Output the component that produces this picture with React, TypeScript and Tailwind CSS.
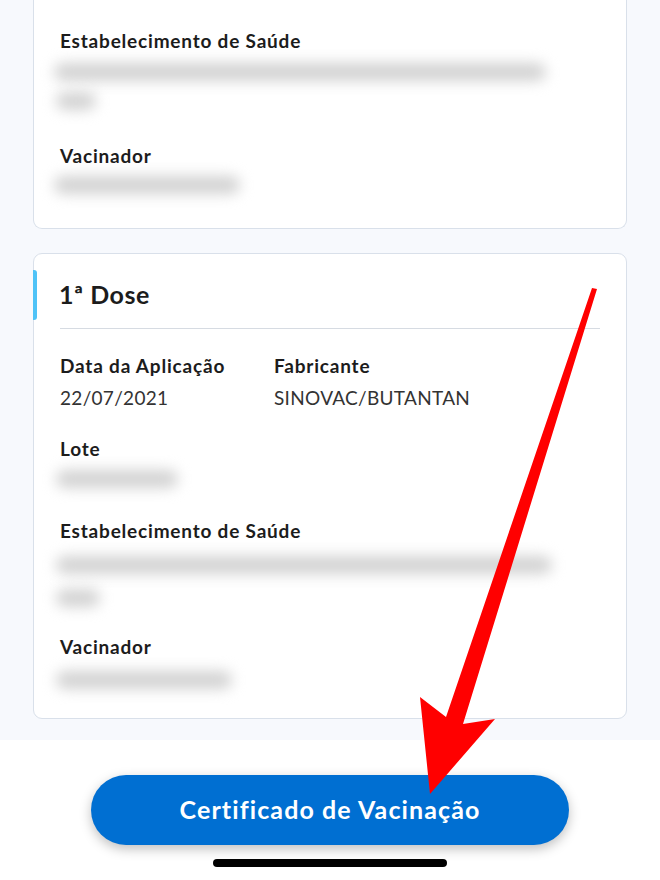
import React from 'react';

const Label: React.FC<{ children: React.ReactNode; className?: string }> = ({ children, className = '' }) => (
  <div className={`text-[19px] font-bold leading-[26px] tracking-[0.8px] text-[#1c1c1c] ${className}`}>{children}</div>
);

const Value: React.FC<{ children: React.ReactNode }> = ({ children }) => (
  <div className="mt-[6px] text-[19px] leading-[26px] tracking-[0.3px] text-[#333]">{children}</div>
);

// blurred, unreadable value (redacted in the screenshot)
const Blur: React.FC<{ className: string }> = ({ className }) => (
  <div className={`h-[18px] rounded-full bg-[#d2d2d2] blur-[7px] ${className}`} />
);

const Arrow = () => (
  <svg className="absolute left-0 top-0 pointer-events-none" width="660" height="880" viewBox="0 0 660 880">
    <polygon
      points="592,288 597,289 463,724 495,719 430,794 420,697 446,717"
      fill="#ff0000"
    />
  </svg>
);

export default function App() {
  return (
    <div className="relative w-[660px] h-[880px] overflow-hidden bg-white" style={{ fontFamily: 'Lato, "Open Sans", sans-serif' }}>
      <div className="h-[740px] bg-[#f7f9fd] px-[33px]">
        {/* previous dose, scrolled past the top */}
        <div className="h-[229px] rounded-b-[9px] border border-t-0 border-[#d9e0ea] bg-white px-[26px] pt-[28px]">
          <Label>Estabelecimento de Saúde</Label>
          <Blur className="mt-[9px] -ml-[6px] w-[492px]" />
          <Blur className="mt-[11px] -ml-[4px] w-[40px]" />
          <Label className="mt-[33px]">Vacinador</Label>
          <Blur className="mt-[7px] -ml-[6px] w-[186px]" />
        </div>

        <div className="mt-[24px] h-[466px] rounded-[9px] border border-[#d9e0ea] bg-white pt-[16px]">
          <div className="flex items-center h-[50px]">
            <div className="w-[4px] h-[50px] -ml-px rounded-r-[3px] bg-[#4fc3f7]" />
            <div className="ml-[22px] text-[25px] font-bold tracking-[0.5px] text-[#1c1c1c]">1ª Dose</div>
          </div>
          <div className="mx-[26px] mt-[8px] h-px bg-[#d6dbe2]" />
          <div className="px-[26px]">
            <div className="mt-[24px] flex">
              <div className="w-[214px]">
                <Label>Data da Aplicação</Label>
                <Value>22/07/2021</Value>
              </div>
              <div>
                <Label>Fabricante</Label>
                <Value>SINOVAC/BUTANTAN</Value>
              </div>
            </div>
            <Label className="mt-[25px]">Lote</Label>
            <Blur className="mt-[8px] -ml-[4px] w-[122px]" />
            <Label className="mt-[30px]">Estabelecimento de Saúde</Label>
            <Blur className="mt-[12px] -ml-[4px] w-[496px]" />
            <Blur className="mt-[15px] -ml-[4px] w-[44px]" />
            <Label className="mt-[27px]">Vacinador</Label>
            <Blur className="mt-[11px] -ml-[4px] w-[176px]" />
          </div>
        </div>
      </div>

      <div className="flex flex-col items-center pt-[35px]">
        <button className="w-[478px] h-[70px] rounded-full bg-[#006fd2] text-white text-[25px] font-bold tracking-[1.1px] shadow-[0_4px_12px_rgba(0,0,0,0.25)]">
          Certificado de Vacinação
        </button>
        <div className="mt-[14px] w-[234px] h-[8px] rounded-full bg-black" />
      </div>

      <Arrow />
    </div>
  );
}
